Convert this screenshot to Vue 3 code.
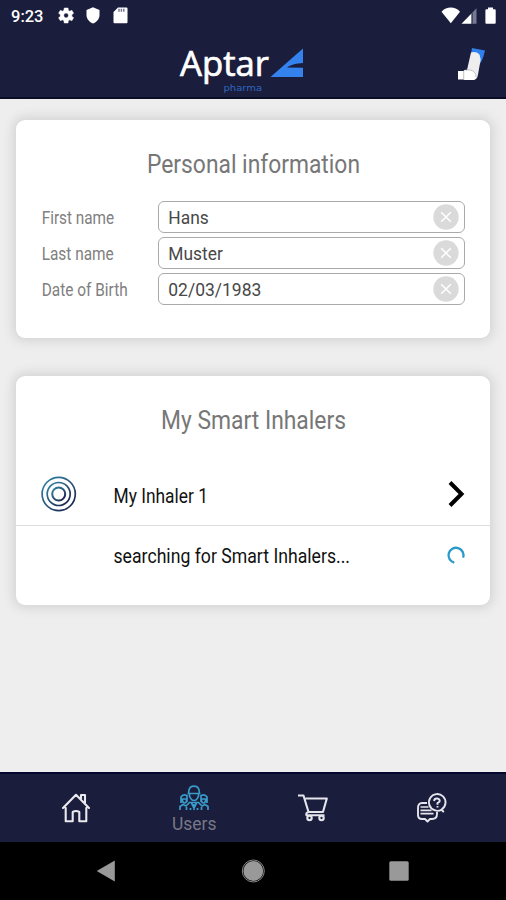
<script setup>
const fields = [
  { label: 'First name', labelWidth: 72.5, value: 'Hans', valueWidth: 40.5 },
  { label: 'Last name', labelWidth: 72, value: 'Muster', valueWidth: 54.5 },
  { label: 'Date of Birth', labelWidth: 86, value: '02/03/1983', valueWidth: 93 },
]
</script>

<template>
  <div class="screen">
    <header class="header">
      <div class="status">
        <svg class="clock" width="36" height="20"><text x="0" y="16" textLength="32.500" lengthAdjust="spacingAndGlyphs">9:23</text></svg>
        <svg class="gear" width="17" height="17" viewBox="2 2 20 20"><path fill="#fff" fill-rule="evenodd" stroke="#fff" stroke-width=".6" d="M19.400 13a7.500 7.500 0 0 0 0-2l2.100-1.600-2-3.500-2.500 1a7.500 7.500 0 0 0-1.700-1L15 3.200h-4.500l-.4 2.700a7.500 7.500 0 0 0-1.700 1l-2.500-1-2 3.500L6 11a7.500 7.500 0 0 0 0 2l-2.100 1.600 2 3.500 2.500-1a7.500 7.500 0 0 0 1.700 1l.4 2.700H15l.3-2.700a7.500 7.500 0 0 0 1.700-1l2.500 1 2-3.500zM12.700 9.200a2.800 2.800 0 1 1 0 5.600 2.800 2.800 0 0 1 0-5.600z"/></svg>
        <svg class="shield" width="14" height="17" viewBox="0 0 14 17"><path fill="#fff" d="M7 .3 13.500 3v5c0 4-3 7.300-6.500 8.500C3.500 15.300.5 12 .5 8V3z"/></svg>
        <svg class="sd" width="15" height="17" viewBox="0 0 15 17"><path fill="#fff" d="M5 .5h8.500a1 1 0 0 1 1 1v13.700a1 1 0 0 1-1 1H1.500a1 1 0 0 1-1-1V5z"/><path d="M6 1.800v3M8.400 1.800v3M10.800 1.800v3" stroke="#77788c" stroke-width="1.500"/></svg>
        <span class="spacer"></span>
        <svg width="57" height="20" viewBox="0 0 57 20"><path fill="#fff" d="M.5 5.700c5-5.600 13.500-5.600 18.500 0L9.800 17.200z"/><path fill="#fff" d="M20.500 17.700 30 7.900v9.800z"/><path fill="#777991" d="M30 7.900 35.500 2.300v15.400H30z"/><path d="M31.500 7v10.700" stroke="#47496a"/><path fill="#fff" d="M47 1.500h5v1.700h1.700a1 1 0 0 1 1 1v12.500a1 1 0 0 1-1 1h-8.300a1 1 0 0 1-1-1V4.200a1 1 0 0 1 1-1H47z"/></svg>
      </div>
      <div class="brand">
        <svg class="logo" width="126" height="54" viewBox="0 0 126 54">
          <text class="logo-name" x="1" y="35" textLength="89" lengthAdjust="spacingAndGlyphs">Aptar</text>
          <text class="logo-sub" x="44.500" y="50" textLength="38.500" lengthAdjust="spacingAndGlyphs">pharma</text>
          <path fill="#3482ee" d="M91.500 36 124 7.500V22c-6 .2-12.500 1.800-16 4.500l16 .3V36z"/>
        </svg>
        <svg class="inhaler" width="30" height="36" viewBox="0 0 30 36">
          <path fill="#2f80ed" d="M15 1 28 3.500 26.300 10l-2.800 6.500-2-7.500-7.400-3z"/>
          <path fill="#eeeeee" d="M14 5.500q5-1.500 8.500 2l1.200 5L21 27.500q-.7 5.500-5.500 5.500H9V23h1z"/>
          <path fill="#fff" d="M1 24h5.500l1-1H13q6 1 6 6.500 0 3.500-4 3.500H7.500l-1-.5H1z"/>
          <path d="M6.700 24v8.500M8 23h5q6 1 6 7" fill="none" stroke="#aaa" stroke-width=".7"/>
        </svg>
      </div>
    </header>

    <main class="content">
      <section class="card personal">
        <svg class="title" width="214" height="34"><text x="1" y="26" textLength="213" lengthAdjust="spacingAndGlyphs">Personal information</text></svg>
        <div class="fields">
          <div v-for="f in fields" :key="f.label" class="field">
            <svg class="label" width="117" height="32"><text x="0.700" y="22.500" :textLength="f.labelWidth" lengthAdjust="spacingAndGlyphs">{{ f.label }}</text></svg>
            <div class="input">
              <svg class="value" width="110" height="30"><text x="0.300" y="21.500" :textLength="f.valueWidth" lengthAdjust="spacingAndGlyphs">{{ f.value }}</text></svg>
              <svg width="26" height="26" viewBox="0 0 26 26"><circle cx="13" cy="13" r="12.700" fill="#dadada"/><path d="m8.200 8.200 9.600 9.600m0-9.600-9.600 9.600" stroke="#fff" stroke-width="1.500"/></svg>
            </div>
          </div>
        </div>
      </section>

      <section class="card devices">
        <svg class="title" width="186" height="34"><text x="1" y="26.500" textLength="185" lengthAdjust="spacingAndGlyphs">My Smart Inhalers</text></svg>
        <div class="row first">
          <svg class="rings" width="36" height="36" viewBox="0 0 36 36">
            <defs><linearGradient id="ring" x1="0" y1="0" x2="1" y2="1"><stop offset="0" stop-color="#2d87a8"/><stop offset=".5" stop-color="#285579"/><stop offset="1" stop-color="#191747"/></linearGradient></defs>
            <g fill="none" stroke="url(#ring)" stroke-width="1.700"><circle cx="17.700" cy="18" r="16.600"/><circle cx="17.700" cy="18" r="11.500"/><circle cx="17.700" cy="18" r="6.500" stroke-width="2"/></g>
          </svg>
          <svg class="item" width="240" height="32"><text x="0.500" y="24.500" textLength="94.500" lengthAdjust="spacingAndGlyphs">My Inhaler 1</text></svg>
          <svg class="chevron" width="18" height="28" viewBox="0 0 18 28"><path d="M3 2.500 14.500 14 3 25.500" fill="none" stroke="#000" stroke-width="4"/></svg>
        </div>
        <div class="row second">
          <span class="blank"></span>
          <svg class="item" width="240" height="32"><text x="0.500" y="24" textLength="236.500" lengthAdjust="spacingAndGlyphs">searching for Smart Inhalers...</text></svg>
          <svg class="spinner" width="18" height="18" viewBox="0 0 18 18"><path d="M7.300 16.600A7.500 7.500 0 1 1 16.100 11.700" fill="none" stroke="#2b9acb" stroke-width="2.300"/></svg>
        </div>
      </section>
    </main>

    <nav class="tabs">
      <div class="tab">
        <svg width="30" height="30" viewBox="0 0 30 30" fill="none" stroke="#e9e9ee" stroke-width="2.100" stroke-linejoin="round" stroke-linecap="round"><path d="M2 15 15 1.800 28 15M4.700 15v13.200h7V19q3.300-2 6.600 0v9.200h7V15M20 6V2h4v8"/></svg>
      </div>
      <div class="tab active">
        <svg width="30" height="26" viewBox="0 0 30 26" fill="none" stroke="#3a9ac8" stroke-width="1.700"><path d="M10 5Q11 1.200 15 1.200T20 5l.5 3.500h-11zM10.500 8v3q1.500 4.500 4.500 4.500t4.500-4.500V8"/><path d="M2 18v-6q2-3.500 6-1.500V17M3.500 14h4v2.500q-2 3-4 0zM28 18v-6q-2-3.500-6-1.500V17M22.500 14h4v2.500q-2 3-4 0z"/><path d="M1 25v-3.500l3-2 3 1.500 3.500-3.500h9L23 21l3-1.500 3 2V25M7.500 25v-3M22.500 25v-3M12.500 18l2.500 5 2.500-5M11.500 25v-2M18.500 25v-2M15 19v6"/></svg>
        <svg class="tab-label" width="45" height="22"><text x="0" y="18.500" textLength="44.500" lengthAdjust="spacingAndGlyphs">Users</text></svg>
      </div>
      <div class="tab">
        <svg width="32" height="30" viewBox="0 0 32 30" fill="none" stroke="#e5e5ec" stroke-width="2.100" stroke-linejoin="round"><path d="M1 2.500h5.500L11.500 19H26l3.800-13.500H8.500M11.500 19q-3 1-2 3.300h18"/><circle cx="12.500" cy="25" r="2.200"/><circle cx="24.500" cy="25" r="2.200"/></svg>
      </div>
      <div class="tab">
        <svg width="30" height="30" viewBox="0 0 30 30" fill="none" stroke="#e5e5ec" stroke-width="1.900" stroke-linejoin="round"><path d="M11 10H6q-4 0-4 5v7q0 4 4 4h3l2.500 2.500L14 26h2q5 0 5-5v-2"/><path d="M4.500 14h8M4.500 17.300h11M4.500 20.600h13" stroke-width="1.700"/><path d="M25.800 16.300A8.300 8.300 0 1 0 18.500 17.200q4 1.500 6.800-.5l2 1.800z"/><path d="M18 8q.5-2.800 3-2.500 3.500.5 2.500 3.200l-2 1.300v1.800M21.500 13v1.500"/></svg>
      </div>
    </nav>
    <footer class="system">
      <svg width="20" height="22" viewBox="0 0 20 22"><path fill="#999" d="M.7 11 18.800.5v21z"/></svg>
      <svg width="24" height="24" viewBox="0 0 24 24"><circle cx="12.300" cy="12" r="9.900" fill="#999"/><circle cx="12.300" cy="12" r="11" fill="none" stroke="#888"/></svg>
      <svg width="20" height="20" viewBox="0 0 20 20"><rect x=".3" y=".3" width="19.400" height="19.400" rx="1.500" fill="#999"/></svg>
    </footer>
  </div>
</template>

<style>
body { margin: 0; background: #eee; }
</style>

<style scoped>
.screen { width: 506px; height: 900px; display: flex; flex-direction: column; background: #eeeeee; font-family: Roboto, sans-serif; overflow: hidden; }
svg { display: block; flex: none; overflow: visible; }
.header { height: 99px; box-sizing: border-box; background: #1b1d3d; border-bottom: 2px solid #0b0c24; }
.status { display: flex; align-items: center; height: 31px; padding: 0 8px 0 11px; box-sizing: border-box; }
.clock { font-size: 16.500px; font-weight: 500; fill: #fff; }
.gear { margin-left: 10px; }
.shield { margin-left: 12px; }
.sd { margin-left: 13px; }
.spacer { flex: 1; }
.brand { display: grid; grid-template-columns: 179px 126px 1fr; padding-top: 10px; }
.logo { grid-column: 2; }
.logo-name { font-family: "Open Sans", sans-serif; font-size: 35.500px; fill: #fff; stroke: #fff; stroke-width: .7px; }
.logo-sub { font-family: "DejaVu Sans", sans-serif; font-size: 9.500px; fill: #2f67bd; }
.inhaler { margin: 6px 0 0 152px; }
.content { flex: 1; display: flex; flex-direction: column; gap: 38px; padding: 21px 16px 0; }
.card { display: flex; flex-direction: column; background: #fff; border-radius: 9px; box-shadow: 0 0 11px 3px #d3d3d3; box-sizing: border-box; }
.personal { height: 218px; padding: 27px 25px 0; }
.devices { height: 229px; padding-top: 26px; }
.title { align-self: center; font-size: 25.500px; fill: #777; }
.fields { display: flex; flex-direction: column; gap: 4px; margin-top: 20px; }
.field { display: flex; height: 32px; }
.label { font-size: 17.500px; fill: #808080; }
.input { flex: 1; height: 32px; box-sizing: border-box; display: flex; align-items: center; justify-content: space-between; padding: 0 5px 0 9px; border: 1px solid #aaa; border-radius: 6px; }
.value { font-size: 17.500px; fill: #484848; }
.row { display: flex; align-items: center; padding: 0 25px; box-sizing: border-box; }
.first { height: 64px; border-bottom: 1px solid #dedede; margin-top: 26px; padding-top: 1px; }
.second { height: 58px; }
.blank { width: 36px; }
.item { margin-left: 36px; font-size: 19.500px; fill: #111; }
.chevron { margin-left: auto; }
.spinner { margin-left: auto; }
.tabs { display: grid; grid-template-columns: 151px 86px 152px 84px; height: 70px; background: #1b1d3d; border-top: 2px solid #05082d; box-sizing: border-box; }
.tab { display: flex; flex-direction: column; align-items: center; justify-content: center; }
.active { padding-top: 1px; }
.tab-label { font-size: 18px; fill: #777985; }
.system { display: flex; align-items: center; justify-content: space-between; height: 58px; padding: 0 97px 0 96px; box-sizing: border-box; background: #000; }
</style>
